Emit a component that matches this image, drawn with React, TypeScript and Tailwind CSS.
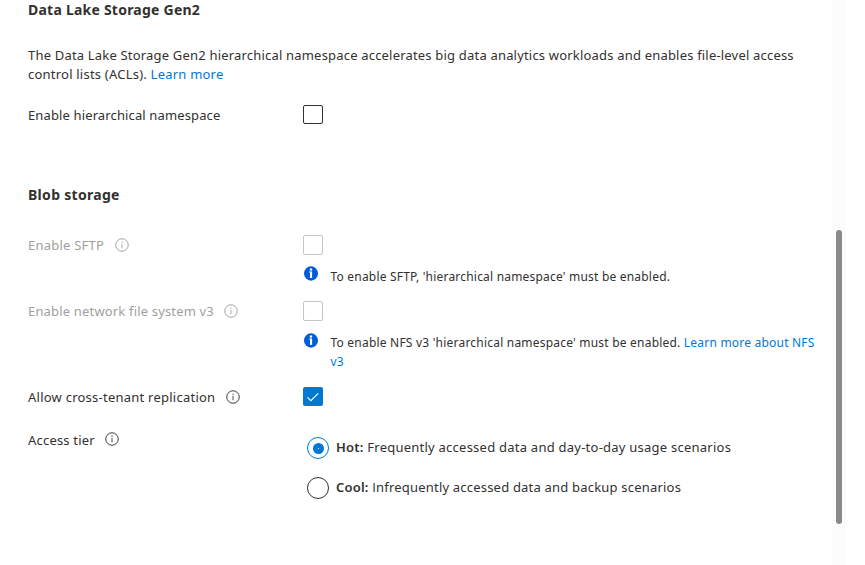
import type { ReactNode } from "react";

function HintIcon({ className = "" }: { className?: string }) {
  return (
    <svg className={`shrink-0 ${className}`} width="14" height="14" viewBox="0 0 14 14" fill="none" stroke="currentColor">
      <circle cx="7" cy="7" r="6.25" strokeWidth="0.95" />
      <path d="M7 5.8v4.4" strokeWidth="0.85" />
      <path d="M7 3.7v1.1" strokeWidth="0.95" />
    </svg>
  );
}

function InfoBadge() {
  return (
    <svg className="shrink-0" width="14" height="15" viewBox="0 0 14 15">
      <ellipse cx="7" cy="7.5" rx="7" ry="7.2" fill="#015cda" />
      <circle cx="7" cy="3.5" r="1.2" fill="#fff" />
      <path d="M5.2 5.6h2.9v6.4H6V6.6H5.2z" fill="#fff" />
    </svg>
  );
}

function Checkbox({ checked = false, disabled = false }: { checked?: boolean; disabled?: boolean }) {
  if (checked) {
    return (
      <div role="checkbox" aria-checked="true" className="flex h-[19px] w-5 items-center justify-center rounded-[2px] bg-[#0078d4]">
        <svg width="12" height="10" viewBox="0 0 12 10" fill="none" stroke="#fff" strokeWidth="1.1">
          <path d="M0.5 5.4L3.9 8.7L11.2 1.4" />
        </svg>
      </div>
    );
  }
  return (
    <div
      role="checkbox"
      aria-checked="false"
      className={`w-5 rounded-[2px] border ${disabled ? "h-5 border-[#c8c6c4]" : "h-[19px] border-[#323130]"}`}
    />
  );
}

function Row({ className = "", label, children }: { className?: string; label: ReactNode; children: ReactNode }) {
  return (
    <div className={`flex ${className}`}>
      <div className="flex w-[275px] shrink-0 items-start">{label}</div>
      <div>{children}</div>
    </div>
  );
}

export default function App() {
  return (
    <div className="flex h-[565px] w-[865px] overflow-hidden bg-white font-['Noto_Sans','Open_Sans',sans-serif] text-[13px] leading-[19px] whitespace-nowrap text-[#323130]">
      <main className="w-[832px] pl-7">
        <h2 className="text-[14px] font-bold tracking-[0.23px]">Data Lake Storage Gen2</h2>
        <div className="mt-[27px]">
          <p className="tracking-[0.19px]">The Data Lake Storage Gen2 hierarchical namespace accelerates big data analytics workloads and enables file-level access</p>
          <p className="tracking-[0.22px]">
            control lists (ACLs). <a className="text-[#0078d4]">Learn more</a>
          </p>
        </div>
        <Row className="mt-[21px] h-[20px]" label={<span className="mt-px tracking-[0.13px]">Enable hierarchical namespace</span>}>
          <Checkbox />
        </Row>
        <h2 className="mt-[60px] text-[14px] font-bold tracking-[0.3px]">Blob storage</h2>
        <Row
          className="mt-[31px] h-[31px]"
          label={
            <div className="flex items-start gap-[10.5px] text-[#a19f9d]">
              <span className="mt-px tracking-[0.22px]">Enable SFTP</span>
              <HintIcon className="mt-[2.5px]" />
            </div>
          }
        >
          <Checkbox disabled />
        </Row>
        <div className="ml-[276px] flex gap-[12.5px]">
          <InfoBadge />
          <span className="mt-px text-[12px] tracking-[0.2px]">To enable SFTP, 'hierarchical namespace' must be enabled.</span>
        </div>
        <Row
          className="mt-[15px] h-[32px]"
          label={
            <div className="flex items-start gap-[10.5px] text-[#a19f9d]">
              <span className="mt-px tracking-[0.17px]">Enable network file system v3</span>
              <HintIcon className="mt-[2.5px]" />
            </div>
          }
        >
          <Checkbox disabled />
        </Row>
        <div className="ml-[276px] flex gap-[12.5px]">
          <InfoBadge />
          <div className="text-[12px] tracking-[0.21px]">
            <p>
              To enable NFS v3 'hierarchical namespace' must be enabled. <a className="text-[#0078d4]">Learn more about NFS</a>
            </p>
            <p>
              <a className="text-[#0078d4]">v3</a>
            </p>
          </div>
        </div>
        <Row
          className="mt-[16px] h-[43px]"
          label={
            <div className="flex items-start gap-[11px]">
              <span className="mt-px tracking-[0.24px]">Allow cross-tenant replication</span>
              <HintIcon className="mt-[2.5px]" />
            </div>
          }
        >
          <Checkbox checked />
        </Row>
        <Row
          label={
            <div className="flex items-start gap-[10px]">
              <span className="mt-px tracking-[0.2px]">Access tier</span>
              <HintIcon className="mt-[1.5px]" />
            </div>
          }
        >
          <div className="mt-[7px] ml-1 flex flex-col gap-[18px]">
            <div className="flex h-[22px] items-start gap-[7px]">
              <div className="flex size-[22px] items-start justify-start rounded-full border border-[#0078d4] pt-[5px] pl-[5px]">
                <div className="flex size-[11px] items-center justify-center rounded-full bg-[#0078d4]">
                  <div className="size-px bg-white/80" />
                </div>
              </div>
              <span className="mt-px tracking-[0.24px]">
                <b className="font-semibold">Hot:</b> Frequently accessed data and day-to-day usage scenarios
              </span>
            </div>
            <div className="flex h-[22px] items-start gap-[7px]">
              <div className="size-[22px] rounded-full border border-[#323130]" />
              <span className="mt-px tracking-[0.2px]">
                <b className="font-semibold">Cool:</b> <span className="font-['Open_Sans']">I</span>nfrequently accessed data and backup scenarios
              </span>
            </div>
          </div>
        </Row>
      </main>
      <div className="w-[14px] bg-[#fcfcfc] pt-[230px] pl-1">
        <div className="h-[294px] w-[6px] rounded-full bg-[#8a8a8a]" />
      </div>
    </div>
  );
}
